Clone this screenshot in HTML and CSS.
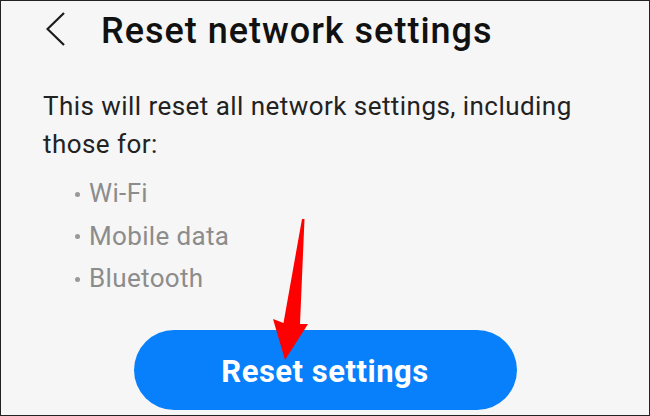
FILE: index.html
```html
<!DOCTYPE html>
<html lang="en">
<head>
    <meta charset="UTF-8">
    <meta name="viewport" content="width=device-width, initial-scale=1.0">
    <title>Reset network settings</title>
    <link rel="stylesheet" href="styles.css">
</head>
<body>
    <div class="screen">
        <div class="header">
            <svg class="back-icon" width="20" height="36" viewBox="0 0 20 36">
                <polyline points="18,1 1.5,17 18,33" fill="none" stroke="#1a1a1a" stroke-width="2.2"/>
            </svg>
            <h1 class="title">Reset network settings</h1>
        </div>

        <p class="description">This will reset all network settings, including those for:</p>

        <ul class="items">
            <li>Wi-Fi</li>
            <li>Mobile data</li>
            <li>Bluetooth</li>
        </ul>

        <div class="actions">
            <button class="reset-button">Reset settings</button>
        </div>

        <!-- Red annotation arrow -->
        <svg class="arrow" width="650" height="416" viewBox="0 0 650 416">
            <polygon points="302,219 304.5,219 300,324 308,324 285,360 273,319 283.5,323" fill="#ff0000"/>
        </svg>
    </div>
</body>
</html>
```

FILE: styles.css
```css
/* Ogólne */
body {
    margin: 0;
    padding: 0;
    font-family: Roboto, "Noto Sans", sans-serif;
}

.screen {
    position: relative;
    width: 650px;
    height: 416px;
    box-sizing: border-box;
    border: 1px solid #222;
    background-color: #f6f6f6;
    overflow: hidden;
}

/* Nagłówek */
.header {
    display: flex;
    align-items: flex-start;
    padding: 10px 0 0 45px;
}

.back-icon {
    margin-top: 1px;
    margin-right: 35px;
}

.title {
    margin: 0;
    font-size: 36px;
    font-weight: 500;
    letter-spacing: 1px;
    line-height: 41px;
    color: #111;
}

/* Treść */
.description {
    margin: 35px 40px 0 42px;
    font-size: 26px;
    letter-spacing: 0.45px;
    line-height: 38px;
    color: #222;
}

.items {
    list-style: none;
    margin: 9px 0 0 0;
    padding: 0 0 0 74px;
    font-size: 26px;
    letter-spacing: 0.35px;
    line-height: 42.5px;
    color: #8c8c8c;
}

.items li {
    display: flex;
    align-items: center;
}

.items li::before {
    content: "";
    width: 5px;
    height: 5px;
    border-radius: 50%;
    background-color: #999;
    margin-right: 9px;
    margin-top: 2px;
}

/* Przycisk */
.actions {
    display: flex;
    justify-content: center;
    margin-top: 30px;
}

.reset-button {
    width: 383px;
    height: 80px;
    padding: 4px 0 0 0;
    border: none;
    border-radius: 40px;
    background-color: #0880fc;
    color: #fff;
    font-family: Roboto, "Noto Sans", sans-serif;
    font-size: 31px;
    font-weight: bold;
    letter-spacing: 0.5px;
    cursor: pointer;
}

.arrow {
    position: absolute;
    top: -1px;
    left: -1px;
    pointer-events: none;
}
```
